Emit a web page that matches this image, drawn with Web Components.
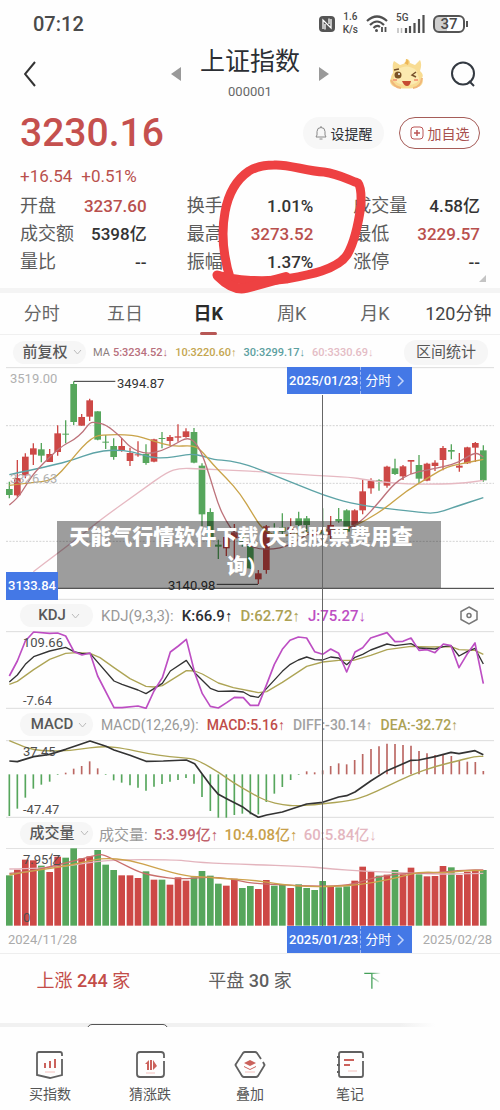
<!DOCTYPE html>
<html lang="zh-CN">
  <head>
    <meta charset="UTF-8" />
    <meta name="viewport" content="width=device-width, initial-scale=1.0" />
    <title>上证指数</title>
    <style>
      body {
        margin: 0;
        background: #fefefe;
        color: #2b2e33;
        font-family: Roboto, "Liberation Sans", "Noto Sans CJK SC", sans-serif;
      }
    </style>
  </head>
  <body>
    <quote-page></quote-page>

    <script>
      const define = (name, html, setup) => {
        const template = document.createElement("template")
        template.innerHTML = `<style>
          * { box-sizing: border-box; }
          button { font: inherit; color: inherit; border: 0; padding: 0; background: none; }
          svg { display: block; }
        </style>${html}`
        customElements.define(
          name,
          class extends HTMLElement {
            constructor() {
              super()
              const shadow = this.attachShadow({ mode: "open" })
              shadow.append(template.content.cloneNode(true))
              if (setup) setup(shadow)
            }
          }
        )
      }

      // top system bar
      define(
        "status-bar",
        `<style>
          :host { display: flex; align-items: center; height: 47px; padding: 0 32px 0 33px; color: #4a4a4a; font-weight: 500; }
          time { flex: 1; font-size: 20px; }
          .icons { display: flex; align-items: center; gap: 8px; }
          .rate { display: flex; flex-direction: column; gap: 1px; font-size: 10px; line-height: 12px; text-align: center; }
          .signal { position: relative; }
          .signal span { position: absolute; left: 0; top: -3px; font-size: 10px; line-height: 12px; }
          .battery { display: flex; align-items: center; gap: 1px; }
          .battery b { width: 32px; height: 18px; border: 2px solid #555; border-radius: 6px; font-size: 15px; line-height: 15px; font-weight: 500; text-align: center; background: linear-gradient(90deg, #cfcfcf 42%, #fff 42%); }
          .battery::after { content: ""; width: 2px; height: 6px; background: #555; }
        </style>
        <time>07:12</time>
        <div class="icons">
          <svg width="16" height="16" viewBox="0 0 16 16"><rect width="16" height="16" rx="4" fill="#555"/><path d="M4 13V4l8 8V3M6 13.500V8M10 2.500V8" fill="none" stroke="#fff" stroke-width="1.300"/></svg>
          <div class="rate"><span>1.6</span><span>K/s</span></div>
          <svg width="22" height="18" viewBox="0 0 22 18" fill="none" stroke="#4f4f4f" stroke-width="2.200"><path d="M1 6Q11-3 21 6M4 10Q11 3 18 10M7.500 13Q11 9.500 14 12"/><circle cx="10.500" cy="15.500" r="1.500" fill="#4f4f4f" stroke="none"/><path d="M16 12v5M19.500 12v5" stroke-width="1.800"/></svg>
          <div class="signal">
            <svg width="29" height="18" viewBox="0 0 29 18" stroke="#4f4f4f" stroke-width="2.200"><path d="M10 13v5M14 11v7M18.500 8v10M23 4v14M27.500 0v18"/><path d="M2 13v5M5.500 13v5" stroke="#bbb" stroke-width="1.500"/></svg>
            <span>5G</span>
          </div>
          <div class="battery"><b>37</b></div>
        </div>`
      )

      define(
        "title-bar",
        `<style>
          :host { display: grid; grid-template-columns: 1fr auto 1fr; align-items: center; height: 63px; padding: 0 24px 12px; box-sizing: border-box; }
          .name { display: flex; align-items: center; gap: 19px; }
          h1 { margin: 0; font-size: 25px; line-height: 30px; font-weight: 400; }
          .name div { text-align: center; }
          small { display: block; font-size: 13px; line-height: 18px; margin-top: 6px; color: #686868; }
          .right { display: flex; justify-content: flex-end; align-items: center; gap: 25px; }
        </style>
        <button aria-label="返回"><svg width="14" height="26" viewBox="0 0 14 26" fill="none" stroke="#333" stroke-width="2"><path d="M11 1 1 13l10 12"/></svg></button>
        <div class="name">
          <button aria-label="上一个"><svg width="10" height="14"><path d="M10 0v14L0 7z" fill="#999"/></svg></button>
          <div><h1>上证指数</h1><small>000001</small></div>
          <button aria-label="下一个"><svg width="10" height="14"><path d="M0 0v14l10-7z" fill="#999"/></svg></button>
        </div>
        <div class="right">
          <svg width="36" height="32" viewBox="0 0 36 32">
            <path d="M4 15C4 10 3 6 5 3l6 4c2-1 4-1 5-2l1-4c3 0 4 2 4 4l5 2 5-5c2 4 1 8 0 11 2 2 4 4 2 7 2 4 0 8-4 9-7 2-17 2-23 0C1 27 0 23 2 20c0-2 1-4 2-5z" fill="#f8dc93"/>
            <path d="M7 12q11-7 20 0l3 8q0 7-12 7T5 20z" fill="#fbeab0"/>
            <path d="M15 5q3-1 2-4 4 1 2 6z" fill="#edb757"/>
            <path d="M2 22q3 7 10 8M33 20q-1 9-9 10" fill="none" stroke="#f1b77a" stroke-width="2"/>
            <circle cx="9" cy="17" r="3.500" fill="#7b5326"/><circle cx="10" cy="16" r="1" fill="#fff"/>
            <path d="m27 14-4 3 4 2M5 12l5-1" fill="none" stroke="#75502b" stroke-width="1.500"/>
            <path d="M13 23h9q-1 5-4 5t-5-5z" fill="#c64a32"/><path d="M4 22h4M25 22h4" stroke="#f4a27c" stroke-width="2"/>
          </svg>
          <button aria-label="搜索"><svg width="26" height="27" viewBox="0 0 26 27" fill="none" stroke="#333941" stroke-width="2"><circle cx="13" cy="12.500" r="11"/><path d="m19 20 5 5"/></svg></button>
        </div>`
      )

      define(
        "stat-item",
        `<style>
          :host { display: flex; justify-content: space-between; font-size: 18px; line-height: 28px; color: #5b5b5b; }
          .value { font-size: 17px; font-weight: 500; color: #333; }
          :host([up]) .value { color: #b9504d; }
        </style>
        <slot name="label"></slot><span class="value"><slot></slot></span>`
      )

      const stats = [
        ["开盘", "3237.60", 1], ["换手", "1.01%"], ["成交量", "4.58亿"],
        ["成交额", "5398亿"], ["最高", "3273.52", 1], ["最低", "3229.57", 1],
        ["量比", "--"], ["振幅", "1.37%"], ["涨停", "--"],
      ]

      define(
        "price-summary",
        `<style>
          :host { display: block; position: relative; padding: 0 20px 12px; border-bottom: 5px solid #f4f4f4; }
          .top { display: flex; align-items: center; gap: 15px; height: 50px; }
          strong { flex: 1; font-size: 39px; line-height: 46px; padding-bottom: 4px; font-weight: 500; color: #c5504e; }
          .top button { display: flex; align-items: center; justify-content: center; gap: 4px; width: 81px; height: 32px; border-radius: 16px; background: #f7f7f7; font-size: 14px; margin-top: -4px; }
          .top .add { border: 1px solid #a55c58; color: #a9514e; background: none; }
          .change { display: flex; gap: 9px; font-size: 17px; line-height: 24px; padding: 4px 0; color: #b9504d; }
          .grid { display: grid; grid-template-columns: repeat(3, 1fr); column-gap: 40px; }
          .corner { position: absolute; right: 14px; bottom: 6px; }
          .scribble { position: absolute; left: 208px; top: 48px; }
        </style>
        <div class="top">
          <strong>3230.16</strong>
          <button><svg width="12" height="14" viewBox="0 0 12 14" fill="none" stroke="#888"><path d="M1 11h10l-1-2V5.500a4 4 0 0 0-8 0V9zM4.500 13h3M6 0v1.500"/></svg>设提醒</button>
          <button class="add"><svg width="14" height="14" viewBox="0 0 14 14" fill="none" stroke="#b55"><rect x="1" y="1" width="12" height="12" rx="3"/><path d="M7 4v6M4 7h6" stroke-width="1.500"/></svg>加自选</button>
        </div>
        <div class="change"><span>+16.54</span><span>+0.51%</span></div>
        <div class="grid"></div>
        <svg class="corner" width="7" height="7"><path d="M7 0v7H0z" fill="#c4c4c4"/></svg>
        <svg class="scribble" width="162" height="140" viewBox="208 158 162 140" fill="none" stroke="#ee4142" stroke-width="9" stroke-linecap="round" stroke-linejoin="round">
          <path d="M231 281Q219 244 225 212 230 184 249 171 259 165 274 165C288 164 306 171 324 172 340 174 350 181 358 183 362 188 361 199 361 205 358 227 353 245 347 255 337 270 308 275 286 279 266 282 235 281 217 275"/>
          <path d="M218 276Q233 291 246 288L286 277" stroke-width="10"/>
        </svg>`,
        (root) => {
          root.querySelector(".grid").innerHTML = stats
            .map(([k, v, up]) => `<stat-item ${up ? "up" : ""}><span slot="label">${k}</span>${v}</stat-item>`)
            .join("")
        }
      )

      define(
        "period-tabs",
        `<style>
          :host { display: grid; grid-template-columns: repeat(6, 1fr); height: 42px; border-bottom: 1px solid #f0f0f0; font-size: 18px; color: #666; }
          button { display: flex; flex-direction: column; align-items: center; padding-top: 3px; line-height: 36px; white-space: nowrap; }
          button.on { font-weight: 700; color: #2b2b2b; }
          button.on::after { content: ""; width: 17px; height: 3px; border-radius: 2px; background: #b75755; }
          button:last-child { color: #444; }
        </style>
        <button>分时</button><button>五日</button><button class="on">日K</button><button>周K</button><button>月K</button><button>120分钟</button>`
      )

      define(
        "pill-button",
        `<style>
          :host { display: block; flex: none; }
          button { display: flex; align-items: center; justify-content: center; gap: 5px; min-width: 73px; height: 23px; padding: 0 3px 0 8px; border-radius: 12px; background: #f6f6f6; color: #585858; font-size: 15px; line-height: 23px; white-space: nowrap; }
          svg { display: none; }
          :host([drop]) svg { display: block; }
          :host([wide]) button { padding: 0 12px; height: 25px; font-weight: 400; }
        </style>
        <button><slot></slot><svg width="9" height="6" fill="none" stroke="#bbb"><path d="m1 1 3.500 4L8 1"/></svg></button>`
      )

      define(
        "indicator-row",
        `<style>
          :host { display: flex; align-items: center; gap: 8px; height: 31px; padding: 0 22px 0 20px; font-size: 14px; font-weight: 500; white-space: nowrap; }
          :host([first]) { height: 32px; gap: 7px; padding: 2px 12px 0 13px; font-size: 11px; }
          :host([large]) { font-size: 15px; }
          :host([tight]) { font-size: 15px; gap: 6px; height: 30px; padding-left: 20px; }
          ::slotted(:last-child:not(span)) { margin-left: auto; }
        </style><slot></slot>`
      )

      define(
        "date-flag",
        `<style>
          :host { display: block; }
          button { display: flex; width: 125px; height: 27px; background: #4478e6; color: #fff; font-size: 13px; line-height: 27px; align-items: center; }
          span { padding: 0 2px; font-weight: 500; }
          b { display: flex; align-items: center; gap: 6px; padding-left: 4px; border-left: 1px dashed #9fbbf4; font-weight: 400; }
        </style>
        <button><span>2025/01/23</span><b>分时<svg width="8" height="12" fill="none" stroke="#c4d5fb" stroke-width="1.500"><path d="m1 1 5 5-5 5"/></svg></b></button>`
      )

      // All chart data uses a 1500 unit wide canvas.
      // candle: [up, open/close top, bottom, high, low]
      const candles = [
        [0,372,390,350,400],[1,339,391,285,395],[1,275,331,265,340],[1,250,269,235,300],[0,253,272,234,292],
        [1,267,291,252,291],[1,205,261,181,272],[0,206,209,166,235],[0,57,171,49,180],[1,156,182,147,182],
        [1,106,155,101,168],[0,139,224,139,226],[0,230,233,210,252],[0,243,276,220,284],[1,243,256,219,260],
        [1,264,288,248,303],[1,268,271,229,275],[0,267,294,238,299],[1,223,290,221,292],[0,219,222,201,250],
        [1,216,228,210,243],[1,214,218,178,230],[1,199,216,190,218],[0,201,293,189,295],[0,302,448,295,483],
        [0,441,518,430,545],[0,539,545,524,582],[1,516,550,500,573],[1,502,520,477,590],[0,508,530,500,545],
        [0,542,610,530,612],[1,625,643,615,657],[1,484,615,480,626],[0,489,492,475,510],[0,487,500,445,510],
        [1,487,495,460,510],[0,460,480,440,490],[0,460,480,453,500],[1,500,512,490,520],[0,488,506,430,530],
        [1,480,510,453,530],[0,462,469,429,473],[0,436,500,433,505],[1,436,480,433,490],[1,379,436,342,448],
        [1,347,370,340,386],[0,346,350,343,377],[1,305,362,302,368],[0,310,327,281,330],[1,304,334,300,345],
        [1,285,290,285,327],[0,300,341,270,355],[1,296,347,293,349],[1,293,303,286,318],[1,249,285,243,316],
        [0,255,260,238,283],[1,302,308,264,320],[1,247,295,245,297],[1,234,248,231,291],[0,256,346,241,350],
      ]
      const volumes = [181,164,134,136,152,171,125,128,100,130,124,105,149,165,181,181,189,169,194,194,209,187,197,187,168,182,206,212,191,219,213,222,195,212,208,219,208,219,225,198,215,217,214,197,155,171,182,179,165,178,158,178,184,183,153,157,180,170,167,165]
      const volumeUp = "011101100110001110101110000110011001000010011101011011101110"
      const macd = [645,623,590,563,551,542,522,515,503,495,481,502,522,538,545,553,560,569,557,549,542,537,531,548,588,630,650,650,642,638,640,640,603,578,558,537,522,511,514,508,495,487,490,477,459,444,436,428,429,432,434,450,457,462,461,465,478,482,483,510]

      const GREEN = "#56a65c"
      const RED = "#cd4846"
      const cx = (i) => Math.round(28 + 24.1 * i)
      const line = (color, points, width = 4) =>
        `<polyline points="${points}" fill="none" stroke="${color}" stroke-width="${width}" stroke-linejoin="round"/>`
      // smooth curve through the midpoints of the given points
      const curve = (color, text, width = 4) => {
        const p = text.split(" ").map((s) => s.split(",").map(Number))
        let d = `M${p[0]}`
        for (let i = 1; i < p.length - 1; i++) {
          d += `Q${p[i]} ${(p[i][0] + p[i + 1][0]) / 2},${(p[i][1] + p[i + 1][1]) / 2}`
        }
        d += `L${p[p.length - 1]}`
        return `<path d="${d}" fill="none" stroke="${color}" stroke-width="${width}"/>`
      }
      const rule = (y, dash) =>
        `<path d="M18 ${y}H1482" stroke="${dash ? "#d4d4d4" : "#dcdcdc"}" stroke-width="3" ${dash ? 'stroke-dasharray="6 4"' : ""}/>`
      const canvas = (top, height, body) => `<svg viewBox="0 ${top} 1500 ${height}" width="100%">${body}</svg>`

      const drawPrice = () =>
        canvas(6, 699,
          rule(8) + rule(182, 1) + rule(355, 1) + rule(529, 1) + rule(703) +
          candles.map(([up, a, b, hi, lo], i) => {
            const c = up ? RED : GREEN
            return `<path d="M${cx(i)} ${hi}V${lo}" stroke="${c}" stroke-width="4"/><rect x="${cx(i) - 10}" y="${a}" width="20" height="${b - a}" fill="${c}"/>`
          }).join("") +
          curve("#e6b9c2", "100,620 240,515 300,465 430,372 500,322 540,309 600,312 700,316 800,321 950,332 1050,336 1100,345 1180,355 1270,358 1380,356 1450,346") +
          curve("#5da3a6", "28,329 150,303 220,285 280,262 340,254 400,260 450,278 500,279 540,272 575,267 610,273 640,284 690,287 750,302 820,330 900,362 970,390 1050,415 1150,430 1240,439 1305,447 1360,427 1450,398") +
          curve("#c9a349", "28,361 100,352 160,346 210,290 246,246 275,220 300,209 400,209 460,228 520,245 575,241 600,252 640,300 680,340 720,385 760,450 785,490 830,515 900,505 980,495 1050,488 1100,465 1161,426 1220,377 1290,335 1340,305 1401,293 1450,283") +
          curve("#bd727a", "28,420 52,401 76,364 101,325 150,275 190,240 222,225 250,200 270,171 290,173 317,179 360,212 390,248 438,268 487,257 530,235 559,218 584,228 607,268 631,340 655,420 679,470 700,500 740,540 780,553 820,552 860,545 900,520 940,500 1000,492 1050,490 1088,465 1136,413 1185,352 1233,325 1281,315 1330,305 1377,293 1425,260 1450,276") +
          `<path d="M222 49H346M650 658H774M170 670H1482" stroke="#333" stroke-width="3"/>`)

      const drawKdj = () =>
        canvas(90, 234,
          rule(92) + rule(322) +
          line("#ada455", "28,250 52,241 101,206 149,175 197,157 230,155 270,157 300,170 342,200 390,233 438,256 462,258 487,254 559,209 584,210 607,219 655,246 700,260 751,270 775,275 800,272 847,244 920,196 968,183 1016,178 1060,178 1112,163 1161,146 1233,136 1290,138 1353,137 1377,146 1425,148 1450,160") +
          line("#333", "28,243 52,222 76,190 101,167 149,150 197,139 222,152 246,158 270,157 342,240 366,250 414,267 438,278 487,247 511,210 559,178 584,215 631,262 655,271 700,270 730,273 751,285 775,289 800,262 847,211 871,190 895,177 920,168 944,176 968,177 992,168 1016,171 1040,191 1065,169 1088,160 1112,147 1161,129 1185,134 1233,128 1257,141 1305,144 1330,137 1353,134 1377,165 1401,152 1425,142 1450,189") +
          line("#bd4ec3", "28,225 52,180 76,120 101,93 149,97 173,96 197,105 222,152 246,162 270,156 293,225 342,320 366,320 414,315 438,322 462,270 487,230 511,153 535,135 559,115 584,215 607,278 631,316 655,321 680,305 703,289 730,290 751,313 775,313 800,250 823,190 847,145 870,118 895,108 920,111 944,152 968,160 992,144 1016,157 1040,213 1065,153 1088,140 1112,111 1161,95 1185,122 1209,121 1233,111 1257,148 1281,146 1305,155 1330,129 1353,134 1377,200 1401,160 1425,126 1450,248", 5))

      const drawMacd = () =>
        canvas(417, 234,
          rule(419) + rule(649) +
          macd.map((y, i) => `<path d="M${cx(i)} 520V${y}" stroke="${y > 520 ? GREEN : "#bb6763"}" stroke-width="5"/>`).join("") +
          curve("#ada455", "28,419 60,433 101,447 150,450 210,449 270,440 320,436 370,442 440,457 510,468 575,472 607,485 655,513 700,545 751,575 800,601 850,612 890,615 960,610 1050,599 1100,585 1161,556 1233,522 1305,496 1377,479 1425,466 1450,466") +
          line("#333", "28,480 52,482 101,467 149,460 197,445 246,428 270,420 318,436 342,447 390,463 438,481 490,480 559,477 584,488 607,520 631,552 655,580 680,593 727,617 751,635 775,649 800,642 847,633 920,609 968,604 1016,588 1040,584 1065,573 1112,540 1161,509 1233,478 1257,477 1305,467 1353,454 1377,458 1425,449 1450,461", 5))

      const drawVolume = () =>
        canvas(99, 234,
          rule(100) +
          volumes.map((y, i) => `<rect x="${cx(i) - 10}" y="${y}" width="20" height="${332 - y}" fill="${+volumeUp[i] ? RED : GREEN}"/>`).join("") +
          curve("#e3b4bd", "28,162 130,160 220,150 330,134 530,134 600,143 750,149 900,153 1000,162 1090,169 1200,172 1300,178 1450,175") +
          curve("#c96f6c", "28,175 80,172 150,155 230,136 290,120 310,118 360,143 420,173 470,184 540,193 620,186 690,190 750,205 850,210 950,214 1050,212 1110,190 1200,175 1300,174 1400,165 1450,165") +
          curve("#cda24c", "28,180 80,170 170,158 250,142 310,129 390,135 470,160 560,184 620,186 680,192 750,194 850,209 930,216 1040,213 1120,203 1200,186 1260,170 1340,174 1400,166 1450,167"))

      define(
        "chart-stack",
        `<style>
          :host { display: block; position: relative; }
          .pane { position: relative; }
          .mark { position: absolute; font-size: 13px; line-height: 16px; color: #4e4e4e; }
          .axis { color: #b0b0b0; }
          .dark { color: #333; }
          .level { left: 6px; bottom: 0; padding: 0 2px; background: #4478e6; color: #fff; line-height: 28px; font-weight: 500; }
          .flag { position: absolute; left: 287px; top: 0; }
          .dates { display: flex; justify-content: space-between; align-items: center; height: 28px; padding: 0 8px; border-bottom: 1px solid #eee; font-size: 13px; color: #aaa; position: relative; }
          .cross { position: absolute; left: 64.4%; top: 60px; bottom: 28px; width: 1px; background: #666; }
          .banner { position: absolute; left: 57px; right: 59px; top: 154px; margin: 0; padding: 2px 26px 7px 10px; background: rgba(0, 0, 0, 0.38); color: #fff; font-size: 21px; line-height: 29px; font-weight: 900; text-align: center; }
        </style>
        <indicator-row first>
          <pill-button drop>前复权</pill-button>
          <span style="color:#8c7f80;font-weight:400;margin-right:-4px">MA</span>
          <span style="color:#b8707d">5:3234.52↓</span>
          <span style="color:#c4a650">10:3220.60↑</span>
          <span style="color:#5ca0a0">30:3299.17↓</span>
          <span style="color:#e4bcc5">60:3330.69↓</span>
          <pill-button wide>区间统计</pill-button>
        </indicator-row>
        <div class="pane" id="price">
          <span class="mark axis" style="left:10px;top:4px">3519.00</span>
          <span class="mark axis" style="left:10px;top:104px">3326.63</span>
          <span class="mark dark" style="left:117px;top:9px">3494.87</span>
          <span class="mark dark" style="left:168px;bottom:6px">3140.98</span>
          <p class="banner">天能气行情软件下载(天能股票费用查询)</p>
          <span class="mark level">3133.84</span>
          <date-flag class="flag"></date-flag>
        </div>
        <indicator-row large>
          <pill-button drop>KDJ</pill-button>
          <span style="color:#999;font-weight:400">KDJ(9,3,3):</span>
          <span>K:66.9↑</span>
          <span style="color:#aca154">D:62.72↑</span>
          <span style="color:#bd4ec3">J:75.27↓</span>
          <button aria-label="设置"><svg width="18" height="19" viewBox="0 0 18 19" fill="none" stroke="#777" stroke-width="1.500"><path d="M9 1 17 5.500v8L9 18 1 13.500v-8z"/><circle cx="9" cy="9.500" r="2"/></svg></button>
        </indicator-row>
        <div class="pane" id="kdj">
          <span class="mark" style="left:23px;top:4px">109.66</span>
          <span class="mark" style="left:23px;bottom:0">-7.64</span>
        </div>
        <indicator-row>
          <pill-button drop>MACD</pill-button>
          <span style="color:#999;font-weight:400">MACD(12,26,9):</span>
          <span style="color:#c04c49">MACD:5.16↑</span>
          <span style="color:#a2a2a2">DIFF:-30.14↑</span>
          <span style="color:#aca154">DEA:-32.72↑</span>
        </indicator-row>
        <div class="pane" id="macd">
          <span class="mark" style="left:23px;top:4px">37.45</span>
          <span class="mark" style="left:23px;bottom:0">-47.47</span>
        </div>
        <indicator-row tight>
          <pill-button drop>成交量</pill-button>
          <span style="color:#999;font-weight:400">成交量:</span>
          <span style="color:#c0626b">5:3.99亿↑</span>
          <span style="color:#c8a04a">10:4.08亿↑</span>
          <span style="color:#e4b6bf">60:5.84亿↓</span>
        </indicator-row>
        <div class="pane" id="volume">
          <span class="mark" style="left:23px;top:4px">7.95亿</span>
          <span class="mark" style="left:23px;bottom:0">0</span>
        </div>
        <div class="cross"></div>
        <div class="dates"><span>2024/11/28</span><date-flag class="flag"></date-flag><span>2025/02/28</span></div>`,
        (root) => {
          const draw = { price: drawPrice, kdj: drawKdj, macd: drawMacd, volume: drawVolume }
          for (const id in draw) root.getElementById(id).insertAdjacentHTML("afterbegin", draw[id]())
        }
      )

      define(
        "market-breadth",
        `<style>
          :host { display: grid; grid-template-columns: repeat(3, 1fr); height: 69px; font-size: 18px; line-height: 54px; text-align: center; color: #5f5f5f; }
          .up { color: #c34d49; }
          .down { color: #56a65c; text-align: left; padding-left: 30px; }
          .down span { background: linear-gradient(90deg, #43a058 45%, #fefefe 100%); background-clip: text; color: transparent; }
          b { font-weight: 500; }
        </style>
        <span class="up">上涨 <b>244</b> 家</span><span>平盘 <b>30</b> 家</span><span class="down"><span>下</span></span>`
      )

      define(
        "sheet-edge",
        `<style>
          :host { display: block; height: 4px; background: linear-gradient(90deg, #f1f1f1 80%, #fefefe 87%); padding-left: 87px; overflow: hidden; }
          div { width: 81px; height: 12px; margin-top: 1px; border: 1px solid #555; border-radius: 5px; background: #fefefe; }
        </style><div></div>`
      )

      define(
        "tool-item",
        `<style>
          :host { display: block; }
          button { display: flex; flex-direction: column; align-items: center; gap: 4px; width: 100%; font-size: 14px; line-height: 20px; color: #555; }
        </style>
        <button><slot name="icon"></slot><slot></slot></button>`
      )

      define(
        "tool-bar",
        `<style>
          :host { display: grid; grid-template-columns: repeat(5, 1fr); padding: 23px 0 4px; }
          svg { fill: none; stroke: #606060; stroke-width: 1.8; }
          .r { fill: #cb625c; stroke: none; }
          .p { fill: #f9dfdd; stroke: none; }
        </style>
        <tool-item><svg slot="icon" width="30" height="30" viewBox="0 0 30 30"><path d="M27 6V4q0-2-2-2H4Q2 2 2 4v21l13 3 12-3V9"/><path class="r" d="M9 13h2v5H9zM14 11h2v7h-2zM19 9h2v9h-2z"/><path class="p" d="M10 21h10v2H10z"/></svg>买指数</tool-item>
        <tool-item><svg slot="icon" width="30" height="30" viewBox="0 0 30 30"><path d="M29 8V5q0-3-3-3H5Q2 2 2 5v19q0 3 3 3h21q3 0 3-3V11"/><path class="r" d="M10 14l4-4v10h-2v-6zM15 10h2v10h-2zM18 10l4 6-4 4z"/><path class="p" d="M11 22h9v2h-9z"/></svg>猜涨跌</tool-item>
        <tool-item><svg slot="icon" width="32" height="30" viewBox="0 0 32 30"><path d="m27 9-4-6Q22 2 21 2H11Q10 2 9 3L2 14q-1 1 0 2l6 10q1 1 2 1h12q1 0 2-1l6-10q1-1 0-2l-1-2"/><path class="r" d="m16 10 6 3-6 3-6-3zM10 16l6 3 6-3v1l-6 3-6-3z"/><path class="p" d="M11 21h10v2H11z"/></svg>叠加</tool-item>
        <tool-item><svg slot="icon" width="30" height="30" viewBox="0 0 30 30"><path d="M28 8V4q0-2-2-2H6Q4 2 4 4v21q0 2 2 2h20q2 0 2-2V11M2 7h3M2 15h3M2 22h3"/><path class="r" d="M9 9h10v2H9zM9 14h6v2H9z"/><path class="p" d="M13 20h9v2h-9z"/></svg>笔记</tool-item>`
      )

      define(
        "quote-page",
        `<style>:host { display: block; overflow: hidden; }</style>
        <status-bar></status-bar>
        <title-bar></title-bar>
        <price-summary></price-summary>
        <period-tabs></period-tabs>
        <chart-stack></chart-stack>
        <market-breadth></market-breadth>
        <sheet-edge></sheet-edge>
        <tool-bar></tool-bar>`
      )
    </script>
  </body>
</html>
